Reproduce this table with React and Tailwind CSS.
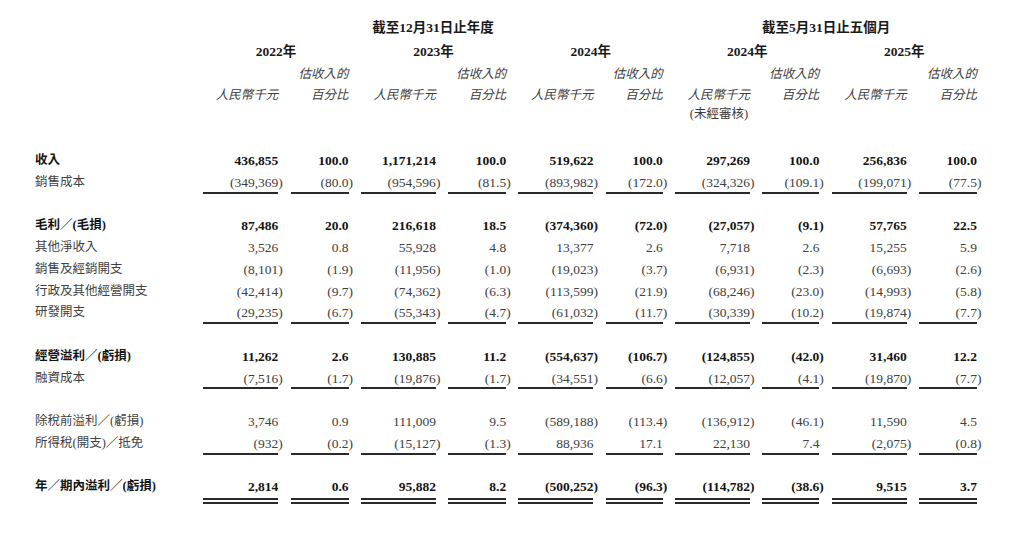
import React from "react";

const FONT = { fontFamily: '"Liberation Serif", "Noto Sans CJK TC", serif' };

const rows = [
  { label: "收入", bold: true, vals: ["436,855", "100.0", "1,171,214", "100.0", "519,622", "100.0", "297,269", "100.0", "256,836", "100.0"] },
  { label: "銷售成本", line: "single", vals: ["(349,369)", "(80.0)", "(954,596)", "(81.5)", "(893,982)", "(172.0)", "(324,326)", "(109.1)", "(199,071)", "(77.5)"] },
  null,
  { label: "毛利／(毛損)", bold: true, vals: ["87,486", "20.0", "216,618", "18.5", "(374,360)", "(72.0)", "(27,057)", "(9.1)", "57,765", "22.5"] },
  { label: "其他淨收入", vals: ["3,526", "0.8", "55,928", "4.8", "13,377", "2.6", "7,718", "2.6", "15,255", "5.9"] },
  { label: "銷售及經銷開支", vals: ["(8,101)", "(1.9)", "(11,956)", "(1.0)", "(19,023)", "(3.7)", "(6,931)", "(2.3)", "(6,693)", "(2.6)"] },
  { label: "行政及其他經營開支", vals: ["(42,414)", "(9.7)", "(74,362)", "(6.3)", "(113,599)", "(21.9)", "(68,246)", "(23.0)", "(14,993)", "(5.8)"] },
  { label: "研發開支", line: "single", vals: ["(29,235)", "(6.7)", "(55,343)", "(4.7)", "(61,032)", "(11.7)", "(30,339)", "(10.2)", "(19,874)", "(7.7)"] },
  null,
  { label: "經營溢利／(虧損)", bold: true, vals: ["11,262", "2.6", "130,885", "11.2", "(554,637)", "(106.7)", "(124,855)", "(42.0)", "31,460", "12.2"] },
  { label: "融資成本", line: "single", vals: ["(7,516)", "(1.7)", "(19,876)", "(1.7)", "(34,551)", "(6.6)", "(12,057)", "(4.1)", "(19,870)", "(7.7)"] },
  null,
  { label: "除稅前溢利／(虧損)", vals: ["3,746", "0.9", "111,009", "9.5", "(589,188)", "(113.4)", "(136,912)", "(46.1)", "11,590", "4.5"] },
  { label: "所得稅(開支)／抵免", line: "single", vals: ["(932)", "(0.2)", "(15,127)", "(1.3)", "88,936", "17.1", "22,130", "7.4", "(2,075)", "(0.8)"] },
  null,
  { label: "年／期內溢利／(虧損)", bold: true, line: "double", vals: ["2,814", "0.6", "95,882", "8.2", "(500,252)", "(96.3)", "(114,782)", "(38.6)", "9,515", "3.7"] },
];

function Num({ v }) {
  if (v.startsWith("(") && v.endsWith(")")) {
    return (
      <>
        {v.slice(0, -1)}
        <span className="-mr-[0.333em]">)</span>
      </>
    );
  }
  return v;
}

const GRID =
  "grid grid-cols-[156px_75px_58px_75px_58px_75px_57px_75px_57px_75px_58px] gap-x-[12.3px]";

export default function App() {
  return (
    <div className="w-[1024px] h-[547px] bg-white overflow-hidden pl-[35px] pt-[17px]" style={FONT}>
      {/* header */}
      <div className={GRID}>
        <div className="col-start-2 col-span-6 text-center font-bold text-[13.5px] leading-[22px] text-[#1a1a1a]">
          截至12月31日止年度
        </div>
        <div className="col-start-8 col-span-4 text-center font-bold text-[13.5px] leading-[22px] text-[#1a1a1a]">
          截至5月31日止五個月
        </div>

        {["2022年", "2023年", "2024年", "2024年", "2025年"].map((y, i) => (
          <div
            key={i}
            className="col-span-2 text-center font-bold text-[13.5px] leading-[26px] text-[#1a1a1a]"
            style={{ gridColumnStart: 2 + i * 2 }}
          >
            {y}
          </div>
        ))}

        <div className="col-start-1" />
        {[0, 1, 2, 3, 4].map((i) => (
          <React.Fragment key={i}>
            <div />
            <div className="text-right italic text-[12.5px] leading-[19px] text-[#3c3c3c]">估收入的</div>
          </React.Fragment>
        ))}

        <div className="col-start-1" />
        {[0, 1, 2, 3, 4].map((i) => (
          <React.Fragment key={i}>
            <div className="text-right italic text-[12.5px] leading-[22px] text-[#3c3c3c] whitespace-nowrap">人民幣千元</div>
            <div className="text-right italic text-[12.5px] leading-[22px] text-[#3c3c3c]">百分比</div>
          </React.Fragment>
        ))}

        <div className="col-start-8 text-right text-[12.5px] leading-[16px] text-[#3c3c3c] whitespace-nowrap pr-[2px]">
          (未經審核)
        </div>
      </div>

      {/* body */}
      <div className={GRID + " mt-[28px]"}>
        {rows.map((r, ri) => {
          if (!r) {
            return <div key={ri} className="col-span-11 h-[21.75px]" />;
          }
          const weight = r.bold ? "font-bold text-[#141414]" : "font-normal text-[#404040]";
          return (
            <React.Fragment key={ri}>
              <div className={`text-[12.5px] leading-[21.75px] h-[21.75px] whitespace-nowrap ${weight}`}>
                {r.label}
              </div>
              {r.vals.map((v, vi) => {
                let deco = "h-[21.75px]";
                if (r.line === "single") deco = "h-[21.75px] shadow-[inset_0_-2px_0_#2a2a2a]";
                if (r.line === "double") deco = "border-b-[6px] border-double border-[#2a2a2a]";
                return (
                  <div
                    key={vi}
                    className={`text-right text-[13.5px] leading-[21.75px] whitespace-nowrap ${weight} ${deco}`}
                  >
                    <Num v={v} />
                  </div>
                );
              })}
            </React.Fragment>
          );
        })}
      </div>
    </div>
  );
}
